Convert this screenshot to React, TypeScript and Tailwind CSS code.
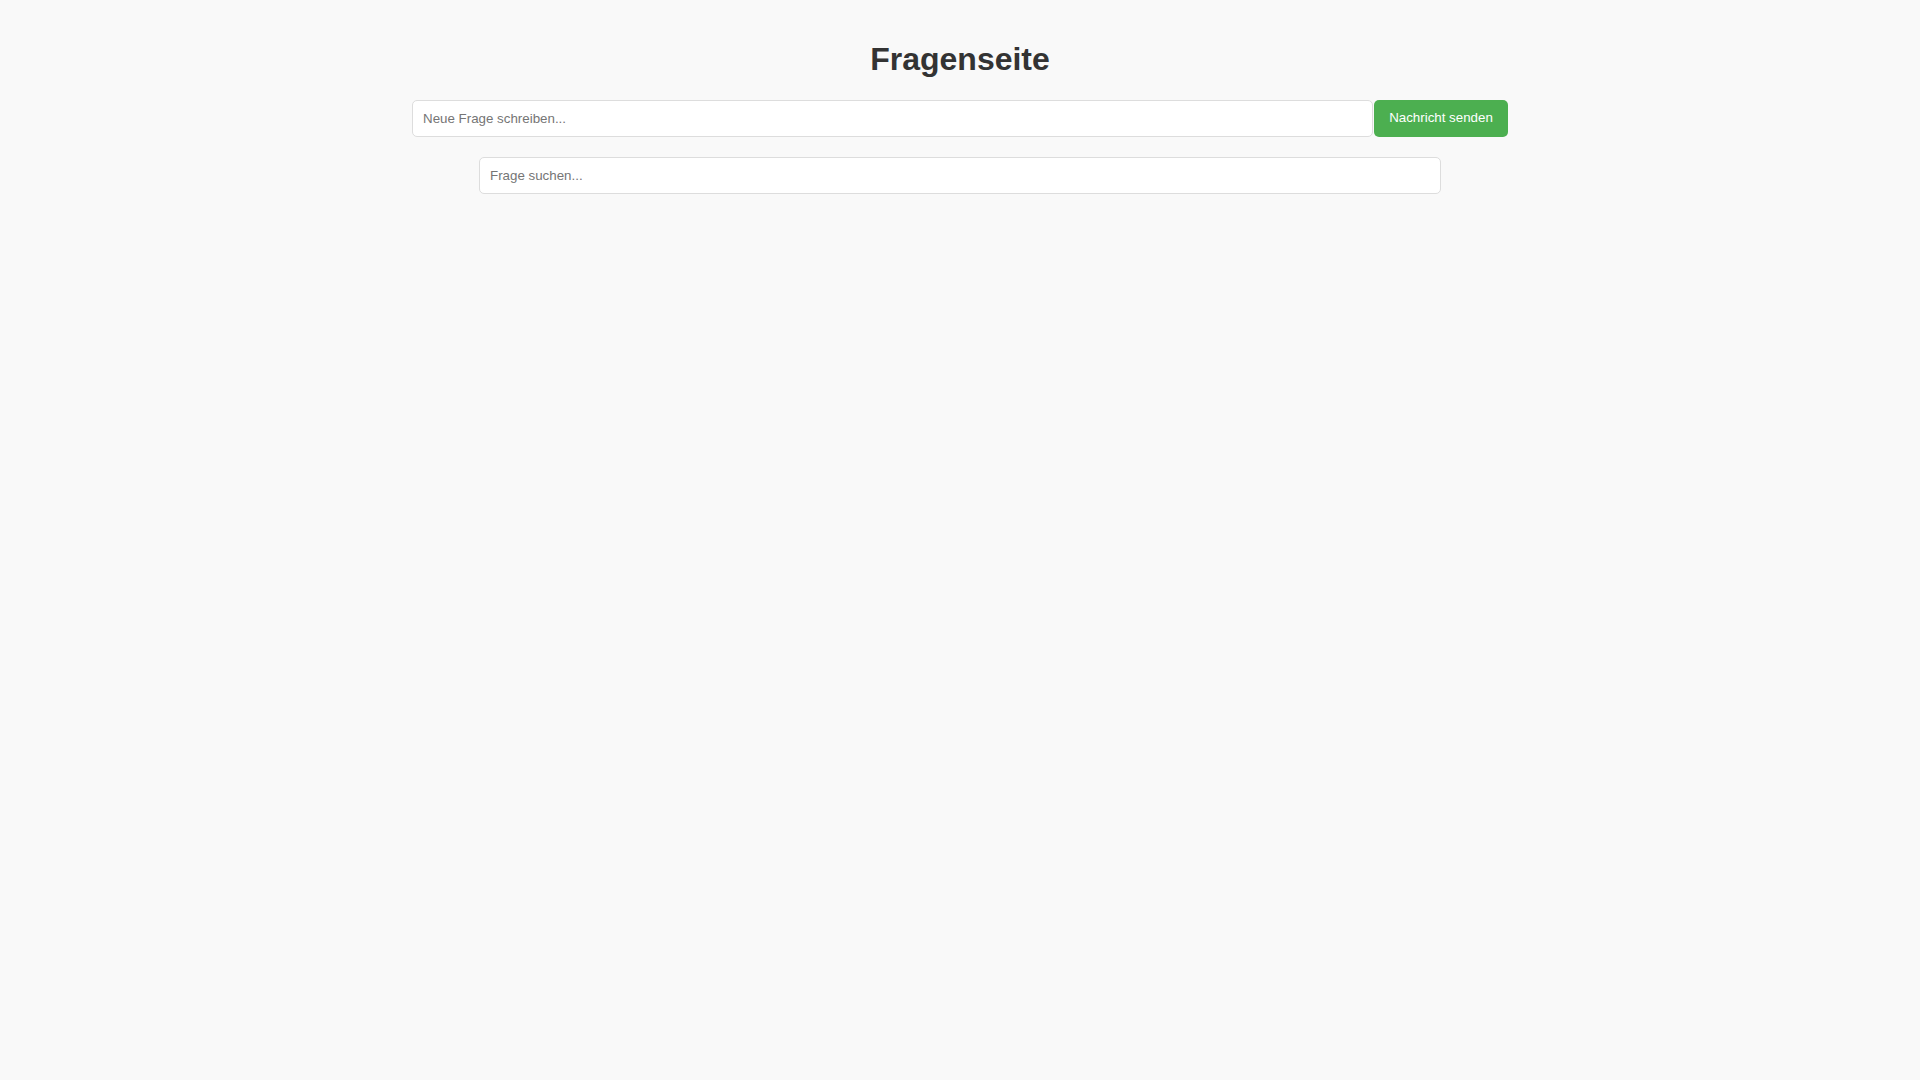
import { useState } from 'react';

export default function App() {
  const [question, setQuestion] = useState('');
  const [search, setSearch] = useState('');

  return (
    <div className="min-h-screen w-full bg-[#f9f9f9] pt-[20px] font-['Liberation_Sans',Arial,sans-serif] text-[#333]">
      {/* Header */}
      <h1 className="my-[21.44px] text-center text-[32px] font-bold leading-[36.8px] text-[#333]">Fragenseite</h1>

      {/* New question row */}
      <div className="mx-auto flex w-[1096px]">
        <input
          value={question}
          onChange={(e) => setQuestion(e.target.value)}
          placeholder="Neue Frage schreiben..."
          className="h-[37px] flex-1 rounded-[5px] border border-[#dddddd] bg-white px-[10px] text-[13.333px] text-[#333] outline-none placeholder:text-[#757575]"
        />
        <button className="ml-px h-[37px] w-[134px] rounded-[5px] bg-[#4caf50] text-[13.333px] text-white">
          Nachricht senden
        </button>
      </div>

      {/* Search */}
      <div className="mx-auto mt-[20px] w-[962px]">
        <input
          value={search}
          onChange={(e) => setSearch(e.target.value)}
          placeholder="Frage suchen..."
          className="h-[37px] w-full rounded-[5px] border border-[#dddddd] bg-white px-[10px] text-[13.333px] text-[#333] outline-none placeholder:text-[#757575]"
        />
      </div>
    </div>
  );
}
